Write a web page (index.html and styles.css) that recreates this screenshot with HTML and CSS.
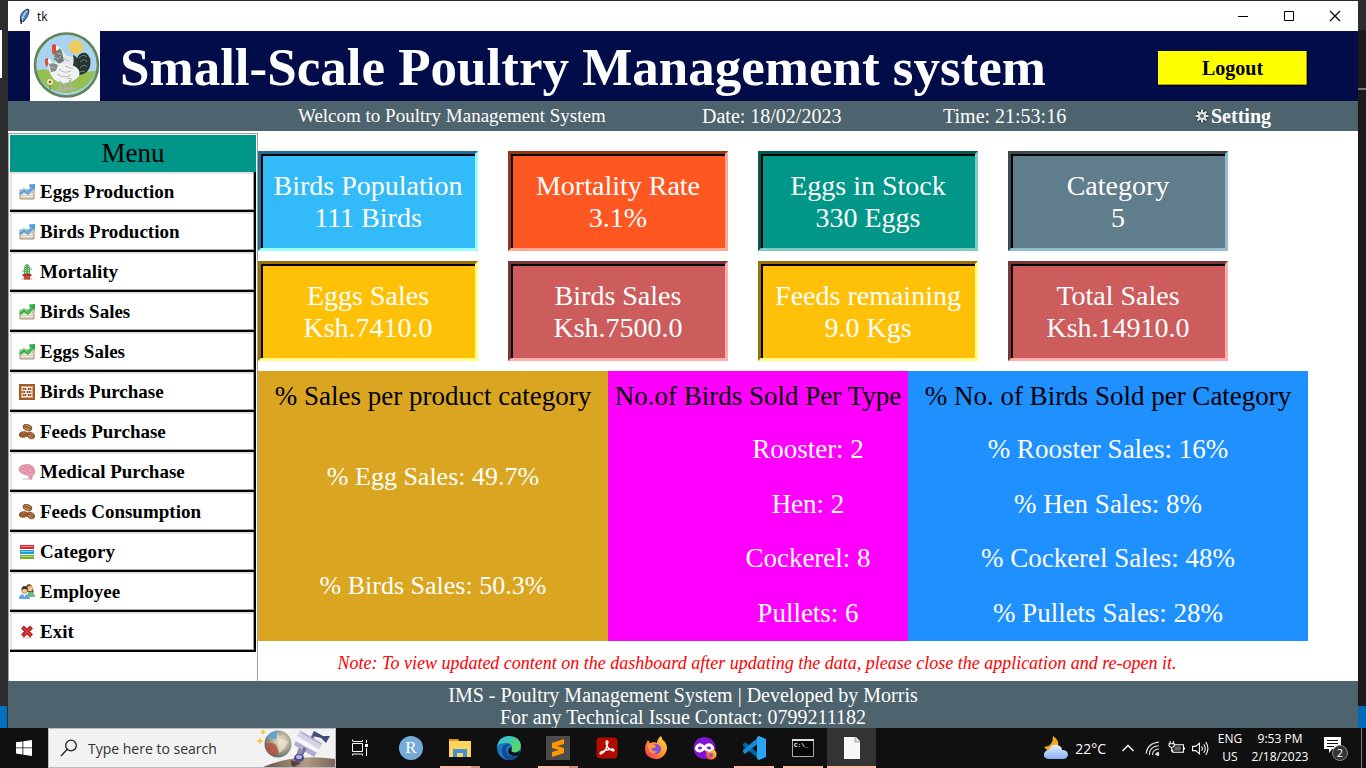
FILE: index.html
```html
<!DOCTYPE html>
<html lang="en">
<head>
<meta charset="utf-8">
<title>tk</title>
<link rel="stylesheet" href="styles.css">
</head>
<body>
<svg class="defs" aria-hidden="true">
  <defs>
    <linearGradient id="edge-a" x1="0" y1="0" x2="1" y2="1"><stop offset="0" stop-color="#2fb9e9"/><stop offset=".6" stop-color="#4fd08a"/><stop offset="1" stop-color="#68dc57"/></linearGradient>
    <linearGradient id="fox" x1="1" y1="0" x2="0" y2="1"><stop offset="0" stop-color="#ffe14a"/><stop offset=".5" stop-color="#ff9228"/><stop offset="1" stop-color="#f0246a"/></linearGradient>
    <linearGradient id="cloud" x1="0" y1="0" x2="0" y2="1"><stop offset="0" stop-color="#e8f0ff"/><stop offset="1" stop-color="#86b0f2"/></linearGradient>
    <linearGradient id="dune" x1="0" y1="0" x2="1" y2="0"><stop offset="0" stop-color="#6b5548"/><stop offset=".6" stop-color="#b09a86"/><stop offset="1" stop-color="#7a6458"/></linearGradient>
    <radialGradient id="globe" cx=".6" cy=".4" r=".6"><stop offset="0" stop-color="#f2ead8"/><stop offset=".6" stop-color="#a9a48c"/><stop offset="1" stop-color="#5f6f6c"/></radialGradient>
    <symbol id="chart" viewBox="0 0 16 16">
      <path d="M1 6h14v9H1z" fill="#dccfba" stroke="#a3957c"/><path d="M2 10.500h12M2 12.500h12" stroke="#f3ecdf"/>
      <path d="M0 9l5-5 3 3 3-3-1-3.500L16 0v6l-2-1-5 6-4-3-3 3z" fill="currentColor"/>
      <path d="M1 8.500l4-3.500 3.500 3.500L13 3" fill="none" stroke="#fff" stroke-opacity=".4"/>
    </symbol>
    <symbol id="beans" viewBox="0 0 16 16">
      <g stroke="#6d3d1a" stroke-width=".7"><ellipse cx="8.500" cy="3.500" rx="4.600" ry="3" fill="#c08149" transform="rotate(20 8.500 3.500)"/><ellipse cx="4.500" cy="10.500" rx="4.300" ry="2.800" fill="#ab6a38" transform="rotate(-8 4.500 10.500)"/><ellipse cx="11.800" cy="11.500" rx="4" ry="3" fill="#b87740" transform="rotate(25 11.800 11.500)"/><path d="M4.500 2.500q4-.5 8 2.500M.5 11q4 .5 8-1M8.500 9.500q4 0 6.500 4" fill="none"/></g>
    </symbol>
  </defs>
</svg>
<div class="desktop">
  <div class="strip strip-left"></div>
  <div class="window">
    <div class="titlebar">
      <svg class="feather" viewBox="0 0 12 18"><path d="M3 15C1 9 3 3 10 1q2 0 1 4-1 5-5 9z" fill="#4c86c8" stroke="#101820" stroke-width=".8"/><path d="M3 16Q4 9 9 3" stroke="#b9d9ff" fill="none" stroke-width="1.500"/><path d="M3 12v5" stroke="#000" stroke-width="1.200"/></svg>
      <span class="tk">tk</span>
      <button class="wbtn" aria-label="Minimize"><svg viewBox="0 0 12 12"><path d="M1 6.500h10" stroke="#000"/></svg></button>
      <button class="wbtn" aria-label="Maximize"><svg viewBox="0 0 12 12"><path d="M1.500 1.500h9v9h-9z" stroke="#000" fill="none"/></svg></button>
      <button class="wbtn" aria-label="Close"><svg viewBox="0 0 12 12"><path d="M1 1l10 10M11 1L1 11" stroke="#000" stroke-width="1.200"/></svg></button>
    </div>
    <header class="header">
      <svg class="logo" viewBox="0 0 70 70" role="img" aria-label="Poultry logo">
        <path d="M0 0h70v70H0z" fill="#fff"/>
        <circle cx="36.500" cy="34" r="31.500" fill="#a9d3ee"/>
        <path d="M6 40q14-7 28 14 12-14 32-14A31.500 31.500 0 0 1 6 40z" fill="#93bf53"/>
        <circle cx="36.500" cy="34" r="31.500" fill="none" stroke="#5f8659" stroke-width="2.600"/>
        <circle cx="46" cy="16" r="7" fill="#eecb5c"/>
        <path d="M46 30Q49 20 56 22q6 4 4 14-4 9-14 8z" fill="#26332f"/>
        <path d="M49 27q4-5 8-1M50 31q5-5 7 0M50 37q4-5 7-1M49 41l6-1" stroke="#6f8278" fill="none"/>
        <path d="M25 16q5-2 7 3l5 6 6 1 4 12-13 4-9-10z" fill="#e6e8e7"/>
        <path d="M25 18q5-3 7 3l2 9-5 3-5-5z" fill="#747b78"/>
        <path d="M43 24q5 1 5 9t-4 9l-3-2q4-8 2-16z" fill="#2f3937"/>
        <path d="M18 27l6 5 10 1 10 2q7 3 5 10-5 6-14 7-10 0-14-8-3-5-3-17z" fill="#f0f1f1"/>
        <path d="M19 33q5-2 9 1l-2 6-5 1z" fill="#858d8a"/>
        <path d="M24 26l4 2 3-3M27 22l4 1M20 36l5 1M29 38q5 5 12 2M27 43q7 5 14 1M35 35l8 3M34 28l5 2M37 47l5 1" stroke="#b1b8b6" fill="none"/>
        <path d="M22 18v-4l3-1 2 3-1 5-3 3-1-3zM15 31v-3l3-1 1 3-1 4-2 2z" fill="#d94d32"/>
        <path d="M26 15q3 0 3 3l-3 2zM18 28q3 0 3 3l-3 1z" fill="#fff"/>
        <path d="M30 50v8l-3 1M35 52v7h-5M40 49l1 9h-5M41 57l5 1" stroke="#b3b1a9" stroke-width="2" fill="none"/>
        <circle cx="20" cy="51" r="3" fill="#eee8bd"/><circle cx="20" cy="51" r="1.300" fill="#87642d"/><path d="M20 54v5" stroke="#617d36"/>
      </svg>
      <h1>Small-Scale Poultry Management system</h1>
      <button class="logout">Logout</button>
    </header>
    <div class="infobar">
      <span class="welcome">Welcom to Poultry Management System</span><span>Date: 18/02/2023</span><span>Time: 21:53:16</span>
      <button class="setting"><svg viewBox="0 0 14 14"><g stroke="#30383d" stroke-width="3.600"><path d="M7 0v14M0 7h14M2 2l10 10M12 2L2 12"/></g><g stroke="#e2e2e2" stroke-width="2"><path d="M7 .5v13M.5 7h13M2.500 2.500l9 9M11.500 2.500l-9 9"/></g><circle cx="7" cy="7" r="3" fill="#4f646f" stroke="#e2e2e2" stroke-width="2"/></svg>Setting</button>
    </div>
    <div class="main">
      <nav class="menu" aria-label="Menu">
        <h2>Menu</h2>
        <button><svg class="blue"><use href="#chart"/></svg>Eggs Production</button>
        <button><svg class="blue"><use href="#chart"/></svg>Birds Production</button>
        <button><svg viewBox="0 0 16 16"><ellipse cx="8" cy="15" rx="6" ry="1" fill="#ccc"/><path d="M5 10V3q3-6 6 0v7z" fill="#59a75a"/><path d="M6.500 2v8M9.500 2v8" stroke="#b5e0a5" stroke-dasharray="1 1"/><path d="M3 7h2M11 5h2" stroke="#59a75a"/><path d="M3.500 10h9v2h-1l-.5 3.500H5L4.500 12h-1z" fill="#c5483d"/><path d="M4 11h8" stroke="#7f1c17"/></svg>Mortality</button>
        <button><svg class="green"><use href="#chart"/></svg>Birds Sales</button>
        <button><svg class="green"><use href="#chart"/></svg>Eggs Sales</button>
        <button><svg viewBox="0 0 16 16"><path d="M1 1h14v14H1z" fill="#f8f2ea" stroke="#a4582d" stroke-width="2"/><path d="M2.500 2.500h11v11h-11z" fill="none" stroke="#d9a37c"/><path d="M3 5h10M3 8h10M3 11h10" stroke="#c98458"/><path d="M4 5h3M9 5h3M3 8h3M8 8h4M4 11h3M9 11h3" stroke="#9b5530" stroke-width="1.800" stroke-dasharray="1.300 .4"/></svg>Birds Purchase</button>
        <button><svg><use href="#beans"/></svg>Feeds Purchase</button>
        <button><svg viewBox="0 0 16 16"><ellipse cx="8" cy="15" rx="5" ry="1" fill="#ddd"/><path d="M0 6Q0 1.500 5 1q5-2 9 2 3 4 1 7-1 1-2 1.500V15h-2l-2-4-4-1Q1 9 0 6z" fill="#eea0b5" stroke="#cc7590" stroke-width=".8"/><path d="M2 6q3-3 5 0M5 3q4-1 5 3M10 3q4 0 3 4M5 9q3-3 6 0M12 9l2-1" stroke="#c9708c" fill="none" stroke-width=".7"/></svg>Medical Purchase</button>
        <button><svg><use href="#beans"/></svg>Feeds Consumption</button>
        <button><svg viewBox="0 0 16 16"><path d="M1 1h14v4H1z" fill="#d9272e"/><path d="M1 6h14v4H1z" fill="#1c9bd7"/><path d="M1 11h14v4H1z" fill="#70b81f"/><path d="M2 2.500h12M2 7.500h12M2 12.500h12" stroke="#fff" stroke-opacity=".45"/></svg>Category</button>
        <button><svg viewBox="0 0 16 16"><path d="M7 7V2q3-4 6 0l2 6-3 2z" fill="#8f5424"/><circle cx="11" cy="4.500" r="2.600" fill="#efc39a"/><path d="M8 13q0-5 4-5 4 1 4 5z" fill="#65bd86"/><path d="M0 15q0-5 5-5t6 5z" fill="#65a5de"/><path d="M4 10h3l-1.500 3z" fill="#fff"/><circle cx="5.500" cy="6.500" r="2.800" fill="#f2c9a0" stroke="#70502e" stroke-width=".6"/><path d="M2.500 6q0-4 3-4t3.500 4Q6 4 2.500 6z" fill="#493523"/></svg>Employee</button>
        <button><svg viewBox="0 0 16 16"><ellipse cx="8" cy="14" rx="6" ry="1" fill="#ddd"/><path d="M3.500 3l9 9M12.500 3l-9 9" stroke="#a91515" stroke-width="4"/><path d="M4 3.500l8 8M12 3.500l-8 8" stroke="#dc3434" stroke-width="2.400"/></svg>Exit</button>
      </nav>
      <main class="content">
        <div class="cards">
          <div class="card sky">Birds Population<br>111 Birds</div>
          <div class="card orange">Mortality Rate<br>3.1%</div>
          <div class="card teal">Eggs in Stock<br>330 Eggs</div>
          <div class="card slate">Category<br>5</div>
          <div class="card amber">Eggs Sales<br>Ksh.7410.0</div>
          <div class="card rose">Birds Sales<br>Ksh.7500.0</div>
          <div class="card amber">Feeds remaining<br>9.0 Kgs</div>
          <div class="card rose">Total Sales<br>Ksh.14910.0</div>
        </div>
        <div class="panels">
          <section class="panel gold"><h3>% Sales per product category</h3><p>% Egg Sales: 49.7%</p><p>% Birds Sales: 50.3%</p></section>
          <section class="panel magenta"><h3>No.of Birds Sold Per Type</h3><p>Rooster: 2</p><p>Hen: 2</p><p>Cockerel: 8</p><p>Pullets: 6</p></section>
          <section class="panel dodger"><h3>% No. of Birds Sold per Category</h3><p>% Rooster Sales: 16%</p><p>% Hen Sales: 8%</p><p>% Cockerel Sales: 48%</p><p>% Pullets Sales: 28%</p></section>
        </div>
        <p class="note">Note: To view updated content on the dashboard after updating the data, please close the application and re-open it.</p>
      </main>
    </div>
    <footer class="footer">IMS - Poultry Management System | Developed by Morris<br>For any Technical Issue Contact: 0799211182</footer>
  </div>
  <div class="strip strip-right"></div>
</div>
<div class="taskbar">
  <button class="start" aria-label="Start"><svg viewBox="0 0 16 16"><path d="M0 2.300l6.500-.9v6.100H0zM7.300 1.300L16 0v7.500H7.300zM0 8.300h6.500v6.200L0 13.600zM7.300 8.300H16V16l-8.700-1.300z" fill="#fff"/></svg></button>
  <div class="search">
    <svg class="glass" viewBox="0 0 18 18"><circle cx="11" cy="6.500" r="5.300" fill="none" stroke="#222" stroke-width="1.300"/><path d="M7 10.500L1 17" stroke="#222" stroke-width="1.300"/></svg>
    <input type="text" placeholder="Type here to search" aria-label="Type here to search">
    <svg class="art" viewBox="0 0 80 38">
      <path d="M8 38Q40 24 80 30v8z" fill="url(#dune)"/>
      <circle cx="23" cy="15" r="13.500" fill="url(#globe)"/><path d="M12 9q4-7 11-7l-2 8z" fill="#5fa6cf"/><path d="M10 15q6-3 11 1l3 8-6 3q-8-3-8-12z" fill="#b4513b" opacity=".8"/><path d="M22 3l3 7 8 2q-2 8-9 12" fill="#eee4cc" opacity=".7"/>
      <path d="M8 0l1 2 2 1-2 1-1 2-1-2-2-1 2-1zM5 8l1 3 3 1-3 1-1 3-1-3-3-1 3-1z" fill="#f2c33c"/>
      <path d="M45 1l23 13-4 6-22-13z" fill="#d5d1e6"/><path d="M42 9l22 11-5 8-20-12z" fill="#b1abd0"/><path d="M41 10l22 12" stroke="#f7f5ff" stroke-width="4"/><path d="M46 3l20 12" stroke="#9e98c2"/><path d="M57 9l3-6M50 19l-4 8" stroke="#6d6897" stroke-width="3"/>
      <path d="M59 2l9 5 7 0-4 7-5-5-8-2z" fill="#404a7c"/><path d="M46 20l-3 8" stroke="#8f8bb5" stroke-width="5"/><ellipse cx="44" cy="29" rx="5" ry="4" fill="#464b88"/><ellipse cx="44" cy="28" rx="3" ry="2" fill="#b9b5da"/><path d="M36 31l10 3-7 4-3-2z" fill="#5a403d"/>
    </svg>
  </div>
  <button class="taskview" aria-label="Task View"><svg viewBox="0 0 18 18" fill="none" stroke="#fff"><path d="M1.500 2V.5M1.500 4.500h10v8h-10zM1.500 2.500h10V1M1.500 16.500v-1.500h10v1.500M15.500 1v3M15.500 9v8"/><path d="M14 5h3v3h-3z" fill="#fff" stroke="none"/></svg></button>
  <div class="apps">
    <button class="app" aria-label="RStudio"><svg viewBox="0 0 24 24"><circle cx="12" cy="12" r="12" fill="#75aadb"/><text x="12" y="17" text-anchor="middle" class="rlogo">R</text></svg></button>
    <button class="app open" aria-label="File Explorer"><svg viewBox="0 0 24 24"><path d="M1 3h9l2 3H1z" fill="#d99a16"/><path d="M1 5h22v16H1z" fill="#ffd35c"/><path d="M5 21v-8h14v8h-4v-4H9v4z" fill="#3d91d4"/></svg></button>
    <button class="app" aria-label="Edge"><svg viewBox="0 0 24 24"><circle cx="12" cy="12" r="12" fill="#1578c9"/><path d="M0 11Q2 0 12 0q11 0 12 10-1 7-9 6-2-1 0-4 0-6-7-5-6 0-8 4z" fill="url(#edge-a)"/><path d="M14 9q-5 0-5 5 1 7 8 6 3 0 5-2-3 6-10 6-7-2-7-9Q5 8 11 8z" fill="#134a91"/><path d="M15 11q-1 4 0 5 4 2 8-1l-1 4q-8 3-11-3 0-4 4-5z" fill="#111"/></svg></button>
    <button class="app open" aria-label="Sublime Text"><svg viewBox="0 0 24 24"><path d="M0 0h24v24H0z" fill="#4b4b4b"/><path d="M6 7l12-4v5l-7 2 7 2v5L6 21v-5l7-2-7-2z" fill="#ff9800"/></svg></button>
    <button class="app" aria-label="Acrobat"><svg viewBox="0 0 24 24"><rect x="1.500" y="1.500" width="21" height="21" rx="4" fill="#b30b00"/><path d="M6 18q5-2 7-12-1-2-2 0 0 6 7 9 2 0 0-2-6 0-12 3-2 2 0 2z" fill="none" stroke="#fff" stroke-width="1.300"/></svg></button>
    <button class="app" aria-label="Firefox"><svg viewBox="0 0 24 24"><path d="M4 4l2 3 4-1 3 1q0-4 4-7 1 4 4 6 4 6 0 12-4 6-10 5Q2 22 1 14 1 8 4 4z" fill="url(#fox)"/><circle cx="12" cy="13" r="5" fill="#8052d9"/><path d="M3 9q4-3 9 1-1 3-5 2 1 4 6 3-3 4-7 1z" fill="#ff9640"/></svg></button>
    <button class="app" aria-label="Firefox Private"><svg viewBox="0 0 24 24"><circle cx="11.500" cy="12" r="11" fill="#8014d2"/><path d="M11.500 12q-4-5-7-2-3 4 2 5 2 0 5-3 3-5 7-2 3 4-2 5-2 0-5-3z" stroke="#fff" stroke-width="3" fill="none"/><path d="M14 15l3 1 3-3q5 3 3 8-3 4-8 2-3-3-1-8z" fill="url(#fox)"/><circle cx="18" cy="19" r="2" fill="#8052d9"/></svg></button>
    <button class="app open solid" aria-label="Visual Studio Code"><svg viewBox="0 0 24 24"><path d="M1 8l2-2 15 13v5L1 10z" fill="#0065a9"/><path d="M1 16l2 2L18 6V0L1 14z" fill="#1689d0"/><path d="M17 0l7 3v18l-7 3-2-1V1z" fill="#29a5f2"/></svg></button>
    <button class="app open solid" aria-label="Command Prompt"><svg viewBox="0 0 24 24"><path d="M1.500 3.500h21v17h-21z" fill="#050505" stroke="#aaa"/><path d="M1 3h22v2H1z" fill="#ddd"/><text x="3" y="11" class="cmd">C:\_</text></svg></button>
    <button class="app active" aria-label="tk"><svg viewBox="0 0 24 24"><path d="M4 1h12l4 4v18H4z" fill="#f7f7f7"/><path d="M15 1v5h5" fill="#ddd" stroke="#888" stroke-width=".7"/></svg></button>
  </div>
  <div class="tray">
    <svg class="weather" viewBox="0 0 25 24"><path d="M10 0q7 4 5 12l-8 5-6-6q9 0 9-11z" fill="#f6a623"/><path d="M5 23q-5-1-4-5 1-4 5-4 2-6 8-5 5 1 5 5 6 0 6 5-1 4-5 4z" fill="url(#cloud)"/></svg>
    <span class="temp">22°C</span>
    <svg class="chev" viewBox="0 0 14 14"><path d="M1.500 10L7 4.500 12.500 10" fill="none" stroke="#fff" stroke-width="1.400"/></svg>
    <svg class="ico" viewBox="0 0 16 16" fill="none" stroke="#ddd"><path d="M2 13Q3 3 14 2M5 14Q5 6 14 5.500M8 14q0-5 6-5.500M11 14q0-2 3-2.500"/><circle cx="13" cy="13.500" r="1" fill="#fff"/></svg>
    <svg class="ico" viewBox="0 0 16 16" fill="none" stroke="#fff"><path d="M6 4.500h8.500v7h-10V9M15.500 7v2M2 1v2M5 1v2M1 3.500h5v2q-2.500 3-5 0zM3.500 7v4"/><path d="M6 6h6v4H6z" fill="#666" stroke="none"/></svg>
    <svg class="ico" viewBox="0 0 16 16" fill="none" stroke="#fff"><path d="M.5 6v4h3L7 13V3L3.500 6zM9 6q1.500 2 0 4M11 4q3 4 0 8M13 2q4 6 0 12"/></svg>
    <span class="lang">ENG<br>US</span>
    <span class="clock">9:53 PM<br>2/18/2023</span>
    <svg class="notif" viewBox="0 0 25 26"><path d="M0 2h17v12H8l-3 4v-4H0z" fill="#fff"/><path d="M3 5.500h11M3 8.500h11M3 11.500h7" stroke="#111"/><circle cx="16" cy="18" r="7.500" fill="#333" stroke="#888"/><text x="16" y="22" text-anchor="middle">2</text></svg>
  </div>
</div>
</body>
</html>
```
FILE: styles.css
```css
* { box-sizing: border-box; }
body {
  margin: 0;
  min-height: 100vh;
  display: flex;
  flex-direction: column;
  background: #1b1b1b;
  font-family: "Liberation Serif", serif;
}
button { border: 0; margin: 0; padding: 0; background: none; font: inherit; color: inherit; }
h1, h2, h3, p { margin: 0; font-weight: normal; }
svg { display: block; flex: none; }
.defs { position: absolute; width: 0; height: 0; }

.desktop { flex: 1; display: flex; padding-top: 1px; background: #2b2b2b; }
.strip { width: 8px; }
.strip-left {
  background: linear-gradient(#0070c0, #0070c0) 0 100% / 7px 22px no-repeat,
    linear-gradient(#fff, #fff) 0 29px / 2px 48px no-repeat, #2d2d2d;
}
.strip-right {
  background: linear-gradient(#006ab8, #006ab8) 0 100% / 100% 22px no-repeat,
    linear-gradient(#777, #777) 0 87px / 100% 2px no-repeat,
    linear-gradient(#2b2b2b, #2b2b2b) 0 0 / 100% 29px no-repeat, #1a1a1a;
}
.window { flex: 1; min-width: 0; display: flex; flex-direction: column; background: #fff; }

.titlebar { height: 30px; display: flex; align-items: center; font: 12px "Open Sans", sans-serif; }
.feather { width: 12px; height: 17px; margin-left: 10px; }
.tk { margin: 0 auto 0 7px; }
.wbtn { width: 46px; height: 30px; display: grid; place-items: center; }
.wbtn svg { width: 12px; height: 12px; }

.header { height: 70px; padding: 0 51px 0 22px; display: flex; align-items: center; background: #010c48; color: #fff; }
.logo { width: 70px; height: 70px; margin-right: 20px; }
.header h1 { font-size: 53px; font-weight: bold; white-space: nowrap; line-height: 60px; padding-top: 2px; }
.logout {
  width: 149px; height: 34px; margin: 4px 0 0 auto; background: #ff0; color: #000;
  font-size: 20px; font-weight: bold; box-shadow: inset -1px -1px #a0a000, 1px 1px #000;
}

.infobar {
  height: 30px; padding-left: 290px; display: grid; align-items: center;
  grid-template-columns: 404fr 241fr 252fr 163fr;
  background: #4d636d; color: #fff; font-size: 20px;
}
.welcome { font-size: 19px; }
.setting { display: flex; align-items: center; gap: 2px; font-weight: bold; }
.setting svg { width: 14px; height: 14px; }

.main { flex: 1; display: flex; padding-top: 2px; }
.menu { width: 250px; padding: 1px; border: 1px solid #a0a0a0; border-bottom: 0; background: #fff; }
.menu h2 { height: 37px; line-height: 37px; background: #009688; font-size: 27px; text-align: center; }
.menu button {
  width: 100%; height: 40px; padding: 0 9px; display: flex; align-items: center; gap: 5px;
  font-size: 19px; font-weight: bold;
  box-shadow: inset -2px -2px #000, inset -3px -3px #a0a0a0, inset 2px 2px #e3e3e3;
}
.menu svg { width: 16px; height: 16px; }
.blue { color: #4a9fe3; }
.green { color: #22b43a; }

.content { flex: 1; min-width: 0; padding-top: 18px; }
.cards { display: grid; grid-template-columns: repeat(4, 1fr); gap: 10px 30px; margin-right: 130px; }
.card {
  height: 100px; padding-top: 16px; border: 3px solid; box-shadow: inset 2px 2px #000;
  color: #fff; font-size: 28px; line-height: 32px; text-align: center; white-space: nowrap;
}
.sky { background: #33bbf9; border-color: #1f7095 #99ffff #99ffff #1f7095; }
.orange { background: #ff5722; border-color: #993414 #ffaa90 #ffaa90 #993414; }
.teal { background: #009688; border-color: #005a52 #80cbc4 #80cbc4 #005a52; }
.slate { background: #607d8b; border-color: #3a4b53 #90bbd0 #90bbd0 #3a4b53; }
.amber { background: #ffc107; border-color: #997404 #ffff83 #ffff83 #997404; }
.rose { background: #cd5c5c; border-color: #7b3737 #ffadad #ffadad #7b3737; }

.panels { display: grid; grid-template-columns: 7fr 6fr 8fr; height: 270px; margin: 10px 50px 0 0; color: #fff; }
.panel { min-width: 0; display: flex; flex-direction: column; font-size: 27px; text-align: center; white-space: nowrap; }
.panel h3 { height: 51px; line-height: 51px; font-size: 27px; color: #000; }
.panel p { flex: 1; display: grid; place-items: center; }
.gold { background: #daa520; }
.gold p { font-size: 26px; }
.magenta { background: #f0f; }
.magenta p { padding-left: 100px; }
.dodger { background: #1e90ff; }
.note { padding: 4px 102px 0 0; line-height: 36px; font-size: 18px; font-style: italic; color: #f00; text-align: center; white-space: nowrap; }
.footer { height: 47px; padding-top: 3px; background: #4d636d; color: #fff; font-size: 20px; line-height: 22px; text-align: center; }

.taskbar { height: 40px; display: flex; background: #101010; color: #fff; font: 12px "Open Sans", sans-serif; }
.start, .taskview { width: 48px; display: grid; place-items: center; }
.start svg { width: 16px; height: 16px; }
.taskview svg { width: 18px; height: 18px; }
.search { width: 288px; display: flex; align-items: center; background: #f2f2f2; border: 1px solid #bbb; }
.glass { width: 18px; height: 18px; margin: 0 10px 0 11px; }
.search input { flex: 1; min-width: 0; padding: 0; border: 0; background: none; font: 14px "Open Sans", sans-serif; }
.search input::placeholder { color: #333; opacity: 1; }
.art { width: 80px; height: 38px; }
.apps { display: flex; padding-left: 2px; }
.app { width: 49px; display: grid; place-items: center; }
.app svg { width: 24px; height: 24px; }
.open { background: linear-gradient(90deg, #ffb9a8 31px, #c98f83 31px) center bottom / 40px 2px no-repeat; }
.solid { background: linear-gradient(#ffb9a8, #ffb9a8) center bottom / 40px 2px no-repeat; }
.active { background: linear-gradient(#ffb9a8, #ffb9a8) bottom / 100% 2px no-repeat #333; }
.rlogo { font: 17px "Liberation Serif", serif; fill: #fff; }
.cmd { font: bold 6px "Liberation Mono", monospace; fill: #fff; }
.tray { margin-left: auto; padding-right: 4px; display: flex; align-items: center; border-right: 1px solid #777; margin-right: 4px; }
.weather { width: 25px; height: 24px; margin-right: 7px; }
.temp { font-size: 14px; margin-right: 15px; white-space: nowrap; }
.chev { width: 14px; height: 14px; margin-right: 9px; }
.ico { width: 17px; height: 17px; margin-right: 7px; }
.lang, .clock { line-height: 18px; text-align: center; white-space: nowrap; }
.lang { width: 28px; }
.clock { width: 72px; }
.notif { width: 25px; height: 26px; margin: 0 8px; }
.notif text { font: 11px "Open Sans", sans-serif; fill: #fff; }
```
